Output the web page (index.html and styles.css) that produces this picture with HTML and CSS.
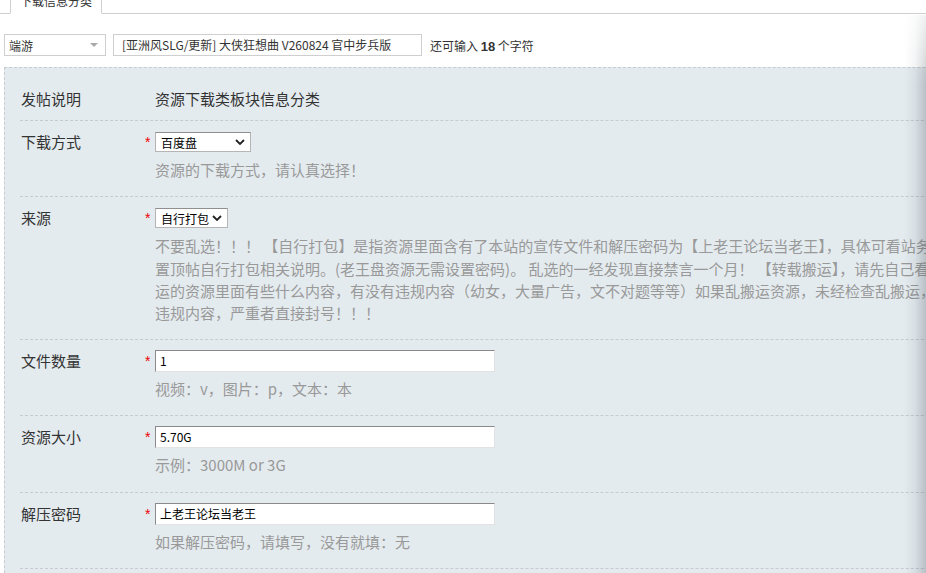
FILE: index.html
```html
<!DOCTYPE html>
<html lang="zh-CN">
<head>
<meta charset="utf-8">
<title>下载信息分类</title>
<link rel="stylesheet" href="styles.css">
</head>
<body>
<div class="page">
  <div class="tabs">
    <div class="tab">下载信息分类</div>
  </div>

  <div class="title-row">
    <div class="type-select">
      <span class="type-text">端游</span>
      <span class="tri"></span>
    </div>
    <div class="title-input">[亚洲风SLG/更新] 大侠狂想曲 V260824 官中步兵版</div>
    <div class="counter">还可输入 <b>18</b> 个字符</div>
  </div>

  <div class="panel">
    <div class="row row-first">
      <div class="label">发帖说明</div>
      <div class="star"></div>
      <div class="field"><div class="value">资源下载类板块信息分类</div></div>
    </div>

    <div class="row">
      <div class="label">下载方式</div>
      <div class="star">*</div>
      <div class="field">
        <div class="ctl">
          <div class="sel sel-w96"><span>百度盘</span><svg class="chev" viewBox="0 0 10 6" width="10" height="6"><path d="M1 1 L5 5 L9 1" fill="none" stroke="#222" stroke-width="1.8"/></svg></div>
        </div>
        <div class="hint">资源的下载方式，请认真选择！</div>
      </div>
    </div>

    <div class="row">
      <div class="label">来源</div>
      <div class="star">*</div>
      <div class="field">
        <div class="ctl">
          <div class="sel sel-w73"><span>自行打包</span><svg class="chev" viewBox="0 0 10 6" width="10" height="6"><path d="M1 1 L5 5 L9 1" fill="none" stroke="#222" stroke-width="1.8"/></svg></div>
        </div>
        <div class="hint nowrap">不要乱选！！！ 【自行打包】是指资源里面含有了本站的宣传文件和解压密码为【上老王论坛当老王】，具体可看站务区<br>置顶帖自行打包相关说明。(老王盘资源无需设置密码)。 乱选的一经发现直接禁言一个月！ 【转载搬运】，请先自己看看搬<br>运的资源里面有些什么内容，有没有违规内容（幼女，大量广告，文不对题等等）如果乱搬运资源，未经检查乱搬运，发现有<br>违规内容，严重者直接封号！！！</div>
      </div>
    </div>

    <div class="row">
      <div class="label">文件数量</div>
      <div class="star">*</div>
      <div class="field">
        <div class="ctl"><div class="inp">1</div></div>
        <div class="hint">视频：v，图片：p，文本：本</div>
      </div>
    </div>

    <div class="row">
      <div class="label">资源大小</div>
      <div class="star">*</div>
      <div class="field">
        <div class="ctl"><div class="inp">5.70G</div></div>
        <div class="hint">示例：3000M or 3G</div>
      </div>
    </div>

    <div class="row">
      <div class="label">解压密码</div>
      <div class="star">*</div>
      <div class="field">
        <div class="ctl"><div class="inp">上老王论坛当老王</div></div>
        <div class="hint">如果解压密码，请填写，没有就填：无</div>
      </div>
    </div>

    <div class="row">
      <div class="label">&nbsp;</div>
    </div>
  </div>
</div>
<div class="side-shadow"></div>
</body>
</html>
```

FILE: styles.css
```css
html, body {
  margin: 0;
  padding: 0;
  background: #fff;
  overflow: hidden;
}
body {
  font-family: "Noto Sans CJK SC", "Microsoft YaHei", sans-serif;
  color: #333;
  width: 926px;
  height: 573px;
  position: relative;
}
.page {
  width: 1200px;
}

/* tabs */
.tabs {
  height: 13px;
  border-bottom: 1px solid #cfcfcf;
  position: relative;
}
.tab {
  position: absolute;
  left: 10px;
  bottom: -1px;
  width: 92px;
  height: 30px;
  border: 1px solid #cfcfcf;
  border-bottom: 1px solid #fff;
  background: #fff;
  font-size: 12px;
  line-height: 14px;
  text-align: center;
  color: #333;
  box-sizing: border-box;
  padding-top: 9px;
}

/* title row */
.title-row {
  display: flex;
  align-items: center;
  margin-top: 20px;
  padding-left: 4px;
  height: 22px;
}
.type-select {
  width: 102px;
  height: 22px;
  box-sizing: border-box;
  border: 1px solid #cfcfcf;
  display: flex;
  align-items: center;
  justify-content: space-between;
  padding: 0 7px 0 4px;
  font-size: 12px;
  color: #333;
}
.tri {
  width: 0;
  height: 0;
  border-left: 4px solid transparent;
  border-right: 4px solid transparent;
  border-top: 4px solid #aaa;
}
.title-input {
  margin-left: 7px;
  width: 309px;
  height: 22px;
  box-sizing: border-box;
  border: 1px solid #cfcfcf;
  font-size: 12px;
  line-height: 20px;
  padding-left: 8px;
  color: #333;
  white-space: nowrap;
  overflow: hidden;
}
.counter {
  margin-left: 8px;
  font-size: 12px;
  color: #333;
}
.counter b {
  font-family: "Liberation Sans", Arial, sans-serif;
  font-weight: bold;
  font-size: 13px;
}

/* panel */
.panel {
  margin-top: 11px;
  margin-left: 4px;
  background: #e4ebef;
  border: 1px dashed #c5cdd3;
  padding: 0 0 20px 15px;
}
.row {
  display: flex;
  border-bottom: 1px dashed #c5cbd0;
  padding: 10px 0 15px;
}
.row-first {
  padding: 20px 0 10px;
}
.label {
  width: 124px;
  padding-left: 1px;
  font-size: 15px;
  line-height: 22px;
  color: #333;
}
.star {
  width: 10px;
  color: #e00;
  font-size: 14px;
  line-height: 22px;
  font-family: "Liberation Sans", Arial, sans-serif;
}
.field {
  flex: 1;
}
.value {
  font-size: 15px;
  line-height: 22px;
  color: #333;
}
.ctl {
  height: 22px;
  display: flex;
  align-items: center;
}
.hint {
  margin-top: 6px;
  font-size: 15px;
  line-height: 22.4px;
  color: #999;
}
.nowrap {
  white-space: nowrap;
  line-height: 22.1px;
}

/* fake select */
.sel {
  height: 20px;
  box-sizing: border-box;
  background: #fff;
  border: 1px solid #b5b5b5;
  border-top-color: #8f8f8f;
  display: flex;
  align-items: center;
  justify-content: space-between;
  padding: 0 5px;
  font-size: 12px;
  color: #000;
  white-space: nowrap;
}
.sel-w96 { width: 96px; }
.sel-w73 { width: 73px; }
.chev {
  flex: none;
}

/* fake input */
.inp {
  width: 340px;
  height: 22px;
  box-sizing: border-box;
  background: #fff;
  border: 1px solid;
  border-color: #8a8a8a #e2e2e2 #e2e2e2 #8a8a8a;
  font-size: 12px;
  line-height: 20px;
  padding-left: 4px;
  color: #000;
}

/* shadow cast by an off-screen element on the right */
.side-shadow {
  position: absolute;
  top: 15px;
  right: 0;
  bottom: 0;
  width: 22px;
  background: linear-gradient(to right, rgba(60,70,80,0) 0%, rgba(60,70,80,0.07) 50%, rgba(60,70,80,0.26) 100%);
  -webkit-mask-image: linear-gradient(to bottom, rgba(0,0,0,0.3) 0, #000 70px);
  mask-image: linear-gradient(to bottom, rgba(0,0,0,0.3) 0, #000 70px);
}
```
